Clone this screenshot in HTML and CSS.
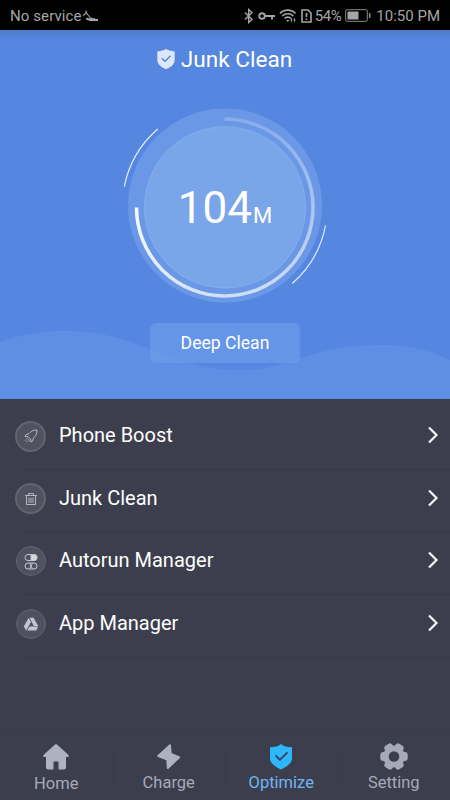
FILE: index.html
```html
<!DOCTYPE html>
<html lang="en">
<head>
  <meta charset="UTF-8" />
  <title>Junk Clean</title>
  <link rel="stylesheet" href="styles.css">
</head>
<body>

<div class="status-bar">
  <span class="carrier">No service</span>
  <svg class="notice" width="15" height="12" viewBox="0 0 15 12" fill="none" stroke="#a5a5a5">
    <path d="M0 5.500L3.500 3 3 .5M2.500 1.500L5 5l2.500 3" stroke-width="1.100" />
    <path d="M3.500 7.500l3 1 2-1 1.500 1 1.500-.5 1 1H15V11H7L3 9.500z" fill="#a5a5a5" stroke="none" />
  </svg>
  <div class="status-icons">
    <svg width="10" height="16" viewBox="0 0 10 16" fill="none" stroke="#a5a5a5" stroke-width="1.400">
      <path d="M1 4.500l7 7L4.700 14.500v-13L8 4.500l-7 7" />
    </svg>
    <svg class="key" width="18" height="10" viewBox="0 0 18 10" fill="none" stroke="#a5a5a5" stroke-width="1.900">
      <circle cx="4" cy="5" r="2.800" />
      <path d="M7 5h10M14 5v3.500" />
    </svg>
    <svg class="wifi" width="18" height="15" viewBox="0 0 18 15" fill="none" stroke="#a5a5a5" stroke-width="1.600">
      <path d="M1 5.500c4-4.500 11.500-4.500 15.500 0M3.200 8c3.200-3 8-3 11.200 0M5.500 10.500c1.800-1.800 4.800-1.800 6.600 0" />
      <path d="M7 12h3.500l-1.700 2z" fill="#a5a5a5" stroke="none" />
      <path d="M12.500 10.500v4M15.500 10.500v4" stroke-width="1.300" stroke-dasharray="3 .7" />
    </svg>
    <svg class="sim" width="11" height="14" viewBox="0 0 11 14" fill="none" stroke="#a5a5a5" stroke-width="1.600">
      <path d="M1 1h6l3 3v9H1zM5.500 4v4M5.500 9.500v1.500" />
    </svg>
    <span class="percent">54%</span>
    <svg class="battery" width="26" height="13" viewBox="0 0 26 13" fill="none" stroke="#8c8c8c">
      <rect x=".7" y=".7" width="21.600" height="11.600" rx="1.500" />
      <rect x="2.500" y="2.500" width="11" height="8" fill="#a5a5a5" stroke="none" />
      <path d="M24.700 4v5" stroke-width="1.500" />
    </svg>
    <span class="clock">10:50 PM</span>
  </div>
</div>

<div class="hero">
  <svg class="wave" width="450" height="70" viewBox="0 0 450 70">
    <path d="M0 13C25 4 45 2 68 2c34 0 61 9 89 21 35 14 58 18 83 18 27 0 43-7 70-15 28-8 48-10 74-10 27 0 47 6 66 15v39H0z" />
  </svg>
  <div class="title">
    <svg width="20" height="22" viewBox="0 0 20 22">
      <path d="M10 .8C8.500 2.500 5 3.200 1.300 3.400V12c0 4.500 4.500 7.500 8.700 9.200 4.200-1.700 8.700-4.700 8.700-9.200V3.400C15 3.200 11.500 2.500 10 .8z" fill="#dbe7fb" />
      <path d="M5.800 10.200L9 13.200l5.500-5.500" fill="none" stroke="#5587e1" stroke-width="1.500" />
    </svg>
    <span>Junk Clean</span>
  </div>

  <div class="gauge">
    <svg width="210" height="206" viewBox="120 103 210 206" fill="none">
      <defs>
        <linearGradient id="tail" gradientUnits="userSpaceOnUse" x1="0" y1="119" x2="0" y2="296">
          <stop offset="0" stop-color="#fff" stop-opacity=".2" />
          <stop offset="1" stop-color="#fff" stop-opacity=".68" />
        </linearGradient>
        <linearGradient id="head" gradientUnits="userSpaceOnUse" x1="225" y1="296" x2="136" y2="208">
          <stop offset="0" stop-color="#fff" stop-opacity=".68" />
          <stop offset="1" stop-color="#fff" stop-opacity=".95" />
        </linearGradient>
      </defs>
      <circle cx="225" cy="205.500" r="97" fill="#6a98e6" />
      <circle cx="225" cy="207.300" r="80.500" fill="#7aa5e8" stroke="#80abed" stroke-width="1.200" />
      <path d="M224.500 119a88.500 88.500 0 0 1 0 177" stroke="url(#tail)" stroke-width="3.500" />
      <path d="M224.500 296a88.500 88.500 0 0 1-88-88.500" stroke="url(#head)" stroke-width="3.500" />
      <path d="M124.300 186.500A103 103 0 0 1 157.700 129M325.500 225.500A103 103 0 0 1 292.300 283.500" stroke="#e3edff" stroke-width="1.200" />
    </svg>
    <div class="amount"><span class="number">104</span><span class="unit">M</span></div>
  </div>

  <div class="deep-btn">Deep Clean</div>
</div>

<div class="menu">
  <div class="row">
    <div class="row-icon">
      <svg width="16" height="16" viewBox="0 0 16 16" fill="none" stroke="#b5b8c3" stroke-width="1">
        <path d="M14 2c-4 0-6 1.200-8 3.700L2.800 6.800 2 8.500l3.200.3 2.500 2.400.3 2.800 1.800-1.200.6-2.800C12.800 8 14 6 14 2z" />
        <path d="M4.500 10L2 12.500M6 11.200L3.300 14M7 12.500L5.500 14" stroke-dasharray="1.500 .6" />
      </svg>
    </div>
    <span class="label">Phone Boost</span>
    <svg class="arrow" width="12" height="18" viewBox="0 0 12 18"><path d="M2 1.500l7.500 7.500L2 16.500" /></svg>
  </div>
  <div class="row">
    <div class="row-icon">
      <svg width="14" height="14" viewBox="0 0 14 14" fill="none" stroke="#b5b8c3" stroke-width="1">
        <path d="M1 3.500h12M4.500 3.500v-2h5v2M2.500 3.500v9h9v-9M5 5.500V11M7 5.500V11M9 5.500V11" />
      </svg>
    </div>
    <span class="label">Junk Clean</span>
    <svg class="arrow" width="12" height="18" viewBox="0 0 12 18"><path d="M2 1.500l7.500 7.500L2 16.500" /></svg>
  </div>
  <div class="row">
    <div class="row-icon small">
      <svg width="14" height="17" viewBox="0 0 14 17" fill="none" stroke="#c3c6d1" stroke-width="1">
        <rect x="1" y="1.500" width="12" height="6" rx="3" />
        <path d="M7 1.500h3a3 3 0 0 1 0 6H7z" fill="#d5d7df" />
        <rect x="1" y="10" width="12" height="6" rx="3" />
        <path d="M5.500 10q3 3 0 6M8.500 10q-3 3 0 6" />
      </svg>
    </div>
    <span class="label">Autorun Manager</span>
    <svg class="arrow" width="12" height="18" viewBox="0 0 12 18"><path d="M2 1.500l7.500 7.500L2 16.500" /></svg>
  </div>
  <div class="row">
    <div class="row-icon small">
      <svg width="16" height="14" viewBox="0 0 16 14" fill="#c3c6d1">
        <path d="M5.500 1L.8 9.500 3.200 13.500 8 5z" />
        <path d="M6.500.7h4L15.200 9h-4.400z" />
        <path d="M6.500 9.500h8.700l-2 4H4.300z" />
      </svg>
    </div>
    <span class="label">App Manager</span>
    <svg class="arrow" width="12" height="18" viewBox="0 0 12 18"><path d="M2 1.500l7.500 7.500L2 16.500" /></svg>
  </div>
</div>

<div class="tabs">
  <div class="tab home">
    <svg width="28" height="28" viewBox="0 0 28 28" fill="#adb2bf">
      <path d="M13 1.500q1-.8 2 0L26.500 12q.8 1.800-1 2H24v10.500q0 2-2 2h-5.500v-8h-5v8H6q-2 0-2-2V14H2.500q-1.800-.2-1-2z" />
    </svg>
    <span>Home</span>
  </div>
  <div class="tab">
    <svg width="28" height="28" viewBox="0 0 28 28" fill="#adb2bf" stroke="#adb2bf" stroke-width="2" stroke-linejoin="round">
      <path d="M15 2.300L3.300 13l9 3.500.5 8.500L24.200 14.300l-8.500-3.600z" />
    </svg>
    <span>Charge</span>
  </div>
  <div class="tab active">
    <svg width="28" height="28" viewBox="0 0 28 28">
      <path d="M14 1c-2.500 2.500-6 3-11 3.300V15c0 5.500 5.500 9 11 11.500C19.500 24 25 20.500 25 15V4.300C20 4 16.500 3.500 14 1z" fill="#2fb7fb" />
      <path d="M8.500 12.500l4.500 4.300 7.500-7.500" fill="none" stroke="#34405a" stroke-width="1.800" />
    </svg>
    <span>Optimize</span>
  </div>
  <div class="tab">
    <svg width="28" height="28" viewBox="0 0 28 28" fill="#a6a9b6">
      <circle cx="14" cy="13.500" r="10.900" />
      <rect x=".3" y="9" width="27.400" height="9" rx="3" />
      <rect x=".3" y="9" width="27.400" height="9" rx="3" transform="rotate(60 14 13.500)" />
      <rect x=".3" y="9" width="27.400" height="9" rx="3" transform="rotate(120 14 13.500)" />
      <circle cx="14" cy="13.500" r="5.300" fill="#3d3e4d" />
    </svg>
    <span>Setting</span>
  </div>
</div>

</body>
</html>
```
FILE: styles.css
```css
* {
  box-sizing: border-box;
}

body {
  margin: 0;
  width: 450px;
  height: 800px;
  overflow: hidden;
  display: flex;
  flex-direction: column;
  background: #3d3e4d;
  color: #fff;
  font-family: Roboto, sans-serif;
}

svg {
  display: block;
  flex-shrink: 0;
}

.status-bar {
  height: 30px;
  flex-shrink: 0;
  padding: 1px 10px 0;
  display: flex;
  align-items: center;
  background: #000;
  color: #a5a5a5;
  font-size: 15px;
  white-space: nowrap;
}

.carrier {
  letter-spacing: 0.1px;
}

.notice {
  margin-left: 1px;
}

.status-icons {
  display: flex;
  align-items: center;
  margin-left: auto;
}

.key { margin-left: 4px; }
.wifi { margin-left: 3px; }
.sim { margin: 0 3px 0 4px; }
.battery { margin: 0 5px 0 4px; }

.percent {
  letter-spacing: -0.4px;
}

.hero {
  position: relative;
  height: 368.5px;
  flex-shrink: 0;
  display: flex;
  flex-direction: column;
  align-items: center;
  background: linear-gradient(#4f7ccd, #5587e1 12px);
}

.wave {
  position: absolute;
  left: 0;
  bottom: 0;
  fill: #5e8fe5;
}

.title {
  height: 58px;
  margin-bottom: 15px;
  padding-right: 2px;
  display: flex;
  align-items: center;
  gap: 5px;
  font-size: 22.6px;
}

.gauge {
  position: relative;
  width: 210px;
  height: 206px;
}

/* number sits on top of the rings */
.amount {
  position: absolute;
  inset: 0;
  display: flex;
  justify-content: center;
  align-items: baseline;
  padding-top: 79px;
  line-height: 52px;
}

.number {
  font-size: 44px;
}

.unit {
  font-size: 22px;
  margin-left: 1px;
}

.deep-btn {
  position: relative;
  width: 150px;
  height: 40px;
  margin-top: 13.5px;
  border-radius: 6px;
  background: rgba(110, 156, 233, 0.65);
  font-size: 17.6px;
  line-height: 41px;
  text-align: center;
}

.menu {
  flex: 1;
  padding-top: 9px;
}

.row {
  position: relative;
  height: 62.5px;
  padding: 0 11px 5px 15px;
  display: flex;
  align-items: center;
}

.row::after {
  content: "";
  position: absolute;
  left: 24px;
  right: 0;
  bottom: 0;
  height: 1px;
  background: #373846;
}

.row-icon {
  width: 31px;
  height: 31px;
  margin-right: 13px;
  border: 2px solid #626370;
  border-radius: 50%;
  background: #515260;
  display: flex;
  justify-content: center;
  align-items: center;
}

.small {
  width: 30px;
  height: 30px;
  margin-left: 1px;
  border-width: 1.5px;
  background: #50515f;
}

.label {
  flex: 1;
  padding-bottom: 2px;
  font-size: 20px;
  line-height: 24px;
}

.arrow {
  margin-bottom: 2px;
  fill: none;
  stroke: #f2f2f5;
  stroke-width: 2.2;
}

.tabs {
  height: 69.5px;
  flex-shrink: 0;
  border-top: 1px solid #393a48;
  display: flex;
}

.tab {
  position: relative;
  flex: 1;
  padding-top: 11px;
  display: flex;
  flex-direction: column;
  align-items: center;
  color: #a6a9b6;
  font-size: 16.5px;
  line-height: 24px;
}

.home {
  line-height: 26px;
}

.tab + .tab::before {
  content: "";
  position: absolute;
  left: 0;
  top: 20px;
  width: 1px;
  height: 32px;
  background: #393a48;
}

.active {
  color: #70b5f3;
}
```
